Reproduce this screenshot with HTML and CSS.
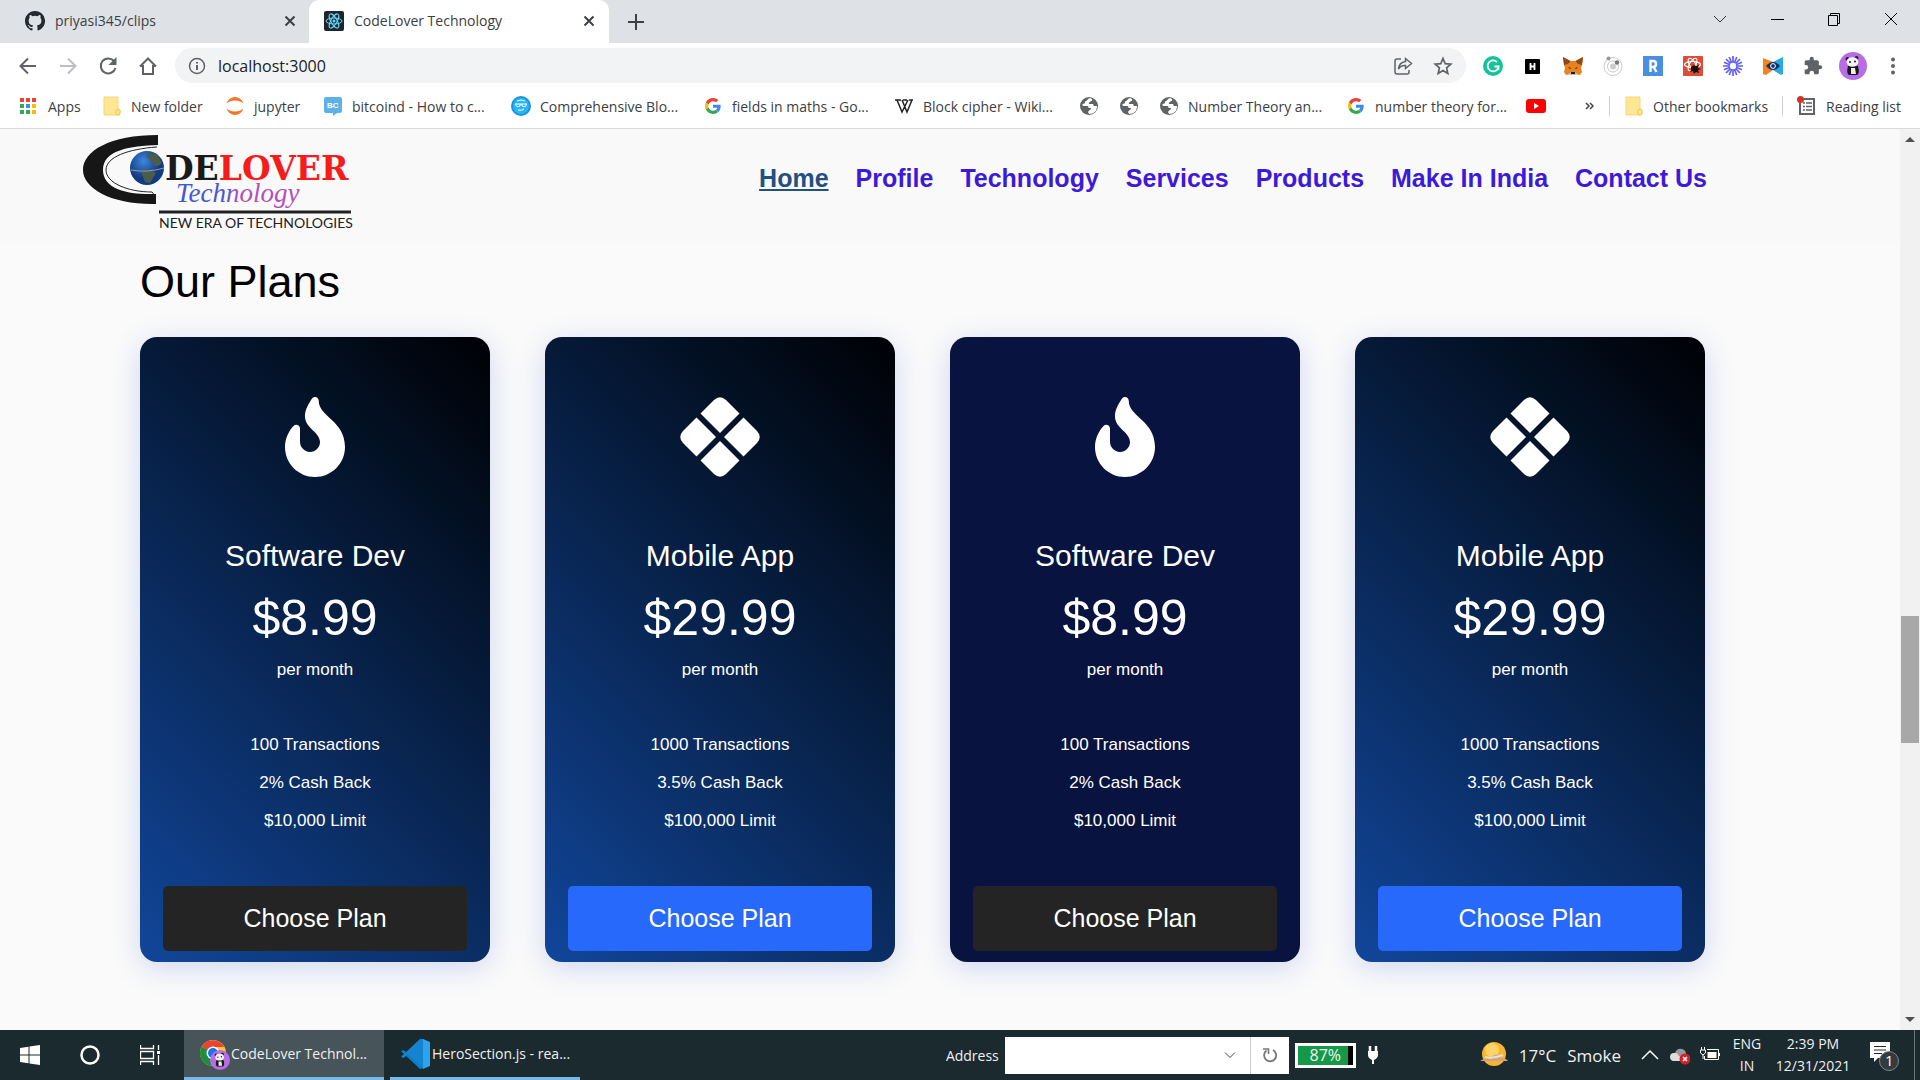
FILE: index.html
```html
<!DOCTYPE html>
<html lang="en">
<head>
<meta charset="utf-8">
<title>CodeLover Technology</title>
<link rel="stylesheet" href="styles.css">
</head>
<body>
<svg class="sprite" aria-hidden="true">
  <symbol id="close" viewBox="0 0 12 12"><path d="M1.500 1.500 10.500 10.500M10.500 1.500 1.500 10.500" stroke="#3c4043" stroke-width="2" fill="none"/></symbol>
  <symbol id="folder" viewBox="0 0 20 20"><path d="M2 1h14v12l2 1v4l-1 1H2z" fill="#ffe694" stroke="#f8d775"/><path d="M14 18v-4l2-1 2 1v3l-1 2h-2z" fill="#ffe694" stroke="#f0c850"/></symbol>
  <symbol id="google" viewBox="0 0 48 48"><path fill="#ea4335" d="M24 9.500c3.540 0 6.710 1.220 9.210 3.600l6.850-6.850C35.900 2.380 30.470 0 24 0 14.620 0 6.510 5.380 2.560 13.220l7.980 6.190C12.430 13.720 17.740 9.500 24 9.500z"/><path fill="#4285f4" d="M46.980 24.550c0-1.570-.15-3.090-.38-4.550H24v9.020h12.940c-.58 2.960-2.260 5.480-4.780 7.180l7.730 6c4.510-4.180 7.090-10.360 7.090-17.650z"/><path fill="#fbbc05" d="M10.530 28.590c-.48-1.450-.76-2.990-.76-4.590s.27-3.140.76-4.590l-7.980-6.190C.92 16.460 0 20.120 0 24s.92 7.540 2.560 10.780l7.970-6.190z"/><path fill="#34a853" d="M24 48c6.480 0 11.930-2.130 15.890-5.810l-7.730-6c-2.150 1.450-4.920 2.300-8.160 2.300-6.260 0-11.570-4.220-13.470-9.910l-7.980 6.190C6.510 42.620 14.620 48 24 48z"/></symbol>
  <symbol id="globe" viewBox="0 0 20 20"><circle cx="10" cy="10" r="9" fill="#5f6368"/><path d="M11 2c-3 1-2 2-4 3S7 7 5 7.500 3 9 4 10h4c2 0 1 2 2 2h2c0 2-2 2-3 4l1 2c5 0 8-3 8-8h-3c-1-1 0-2-2-2h-3c-1-1 1-2 2-3 2 0 1-2 1-2z" fill="#fff"/></symbol>
  <symbol id="flame" viewBox="0 0 384 512"><path fill="#fff" d="M216 23.860c0-23.800-30.650-32.770-44.150-13.040C48 191.850 224 200 224 288c0 35.630-29.110 64.460-64.850 63.990-35.170-.45-63.150-29.770-63.150-64.940v-85.510c0-21.700-26.470-32.230-41.430-16.500C27.800 213.160 0 261.330 0 320c0 105.870 86.130 192 192 192s192-86.130 192-192c0-170.290-168-193.170-168-296.140z"/></symbol>
  <symbol id="diamonds" viewBox="0 0 80 80"><g fill="#fff"><path d="M20.500 16.500 34 3q6-5.500 12 0l13.500 13.500L40 36z"/><path d="M20.500 63.500 34 77q6 5.500 12 0l13.500-13.500L40 44z"/><path d="M16.500 20.500 3 34q-5.500 6 0 12l13.500 13.500L36 40z"/><path d="M63.500 20.500 77 34q5.500 6 0 12L63.500 59.500 44 40z"/></g></symbol>
  <symbol id="panda" viewBox="0 0 28 28"><circle cx="14" cy="14" r="14" fill="#b86de4"/><path d="M9 14q-2 8 1 9h8q3-1 1-9l-5-2z" fill="#181818"/><path d="M12 16h4l1 6h-5z" fill="#eee"/><circle cx="8.500" cy="7" r="2" fill="#222"/><circle cx="17.500" cy="6" r="2" fill="#222"/><ellipse cx="13.500" cy="10" rx="6" ry="4.800" fill="#f2f2f2"/><circle cx="11" cy="10" r="1" fill="#222"/><circle cx="16" cy="9.500" r="1" fill="#222"/></symbol>
</svg>

<div class="tabs">
  <div class="tab">
    <svg class="i20" viewBox="0 0 16 16"><path fill="#24292f" d="M8 0C3.580 0 0 3.580 0 8c0 3.540 2.290 6.530 5.470 7.590.4.070.55-.17.55-.38 0-.19-.01-.82-.01-1.490-2.010.37-2.530-.49-2.690-.94-.09-.23-.48-.94-.82-1.130-.28-.15-.68-.52-.01-.53.63-.01 1.080.58 1.230.82.72 1.210 1.870.87 2.330.66.070-.52.280-.87.51-1.070-1.780-.2-3.640-.89-3.640-3.950 0-.87.31-1.590.82-2.150-.08-.2-.36-1.020.08-2.120 0 0 .67-.21 2.200.82a7.600 7.600 0 0 1 4 0c1.530-1.040 2.200-.82 2.200-.82.44 1.100.16 1.920.08 2.120.51.560.82 1.270.82 2.150 0 3.070-1.870 3.750-3.650 3.950.29.25.54.73.54 1.480 0 1.070-.01 1.930-.01 2.200 0 .21.15.46.55.38A8 8 0 0 0 8 0z"/></svg>
    <span class="tab-title">priyasi345/clips</span>
    <button class="bare" aria-label="Close tab"><svg class="i12"><use href="#close"/></svg></button>
  </div>
  <div class="tab tab-active">
    <svg class="i20" viewBox="0 0 20 20"><rect width="20" height="20" rx="2" fill="#20232a"/><g fill="none" stroke="#61dafb"><ellipse cx="10" cy="10" rx="8" ry="3"/><ellipse cx="10" cy="10" rx="8" ry="3" transform="rotate(60 10 10)"/><ellipse cx="10" cy="10" rx="8" ry="3" transform="rotate(120 10 10)"/></g><circle cx="10" cy="10" r="1.500" fill="#61dafb"/></svg>
    <span class="tab-title">CodeLover Technology</span>
    <button class="bare" aria-label="Close tab"><svg class="i12"><use href="#close"/></svg></button>
  </div>
  <button class="bare new-tab" aria-label="New tab"><svg class="i16" viewBox="0 0 16 16"><path d="M8 0v16M0 8h16" stroke="#3c4043" stroke-width="2"/></svg></button>
  <div class="window-buttons">
    <button class="bare" aria-label="Search tabs"><svg class="i14" viewBox="0 0 14 14"><path d="m1 4 6 6 6-6" stroke="#333" fill="none"/></svg></button>
    <button class="bare" aria-label="Minimize"><svg class="i14" viewBox="0 0 14 14"><path d="M1 7.500h13" stroke="#000"/></svg></button>
    <button class="bare" aria-label="Restore"><svg class="i14" viewBox="0 0 14 14"><path d="M1.500 3.500h9v10h-9zM3.500 3V1.500h9v10H11" stroke="#000" fill="none"/></svg></button>
    <button class="bare" aria-label="Close window"><svg class="i14" viewBox="0 0 14 14"><path d="m1 1 12 12M13 1 1 13" stroke="#000"/></svg></button>
  </div>
</div>

<div class="toolbar">
  <button class="bare tool" aria-label="Back"><svg class="i20" viewBox="0 0 20 20"><path d="M18 10H3M10 2.500 2.500 10l7.500 7.500" stroke="#5f6368" stroke-width="2" fill="none"/></svg></button>
  <button class="bare tool" aria-label="Forward"><svg class="i20" viewBox="0 0 20 20"><path d="M2 10h15M10 2.500l7.500 7.500-7.500 7.500" stroke="#bcbec1" stroke-width="2" fill="none"/></svg></button>
  <button class="bare tool" aria-label="Reload"><svg class="i20" viewBox="0 0 20 20"><path d="M16 5A7.500 7.500 0 1 0 17.500 12" stroke="#5f6368" stroke-width="2" fill="none"/><path d="M18.500 1v8h-8z" fill="#5f6368"/></svg></button>
  <button class="bare tool" aria-label="Home"><svg class="i20" viewBox="0 0 20 20"><path d="M5 9v9h10V9M2 10.500 10 2.500l8 8M2.500 10H5m10 0h2.500" stroke="#5f6368" stroke-width="2" fill="none"/></svg></button>
  <form class="omnibox">
    <svg class="i18" viewBox="0 0 18 18"><circle cx="9" cy="9" r="7.500" stroke="#5f6368" stroke-width="1.500" fill="none"/><path d="M9 8v5M9 5v1.500" stroke="#5f6368" stroke-width="2"/></svg>
    <input class="url" type="text" aria-label="Address and search bar" value="localhost:3000">
    <button type="button" class="bare tool" aria-label="Share"><svg class="i20" viewBox="0 0 20 20"><path d="M8 3H4Q2 3 2 5v11q0 2 2 2h10q2 0 2-2v-2" stroke="#5f6368" stroke-width="1.500" fill="none"/><path d="M12.500 2.500 18.500 7.500l-6 5V9.500Q8 9 5.500 13 6 6.500 12.500 5.500z" stroke="#5f6368" stroke-width="1.500" fill="none"/></svg></button>
    <button type="button" class="bare tool" aria-label="Bookmark this tab"><svg class="i20" viewBox="0 0 20 20"><path d="m10 2.500 2.200 5.200 5.600.5-4.200 3.700 1.200 5.500-4.800-2.900-4.800 2.900 1.200-5.500-4.200-3.700 5.600-.5z" stroke="#5f6368" stroke-width="1.700" fill="none"/></svg></button>
  </form>
  <button class="bare tool" aria-label="Grammarly"><svg class="i20" viewBox="0 0 20 20"><circle cx="10" cy="10" r="10" fill="#15c39a"/><path d="M14 6A5.500 5.500 0 1 0 15 12.500M15.500 14V10.500H11.500" stroke="#fff" stroke-width="1.800" fill="none"/></svg></button>
  <button class="bare tool" aria-label="H extension"><svg class="i20" viewBox="0 0 20 20"><rect x="2" y="3" width="15" height="15" rx="1" fill="#000"/><path d="M7.500 7v7M11.500 7v7M7.500 10.500h4" stroke="#fff" stroke-width="1.800"/></svg></button>
  <button class="bare tool" aria-label="MetaMask"><svg class="i20" viewBox="0 0 20 20"><path d="m0 1 7.500 4h5L20 1l-1 8-1 3 1 4-2 3-5-1-2 1-2-1-5 1-2-3 1-4-1-3z" fill="#e8821e"/><path d="m0 1 7.500 4L5 8 1 9zM20 1l-7.500 4L15 8l4 1z" fill="#8a4a1c"/><path d="m5 18 3 1h4l3-1-3-2H8z" fill="#c9b9a8"/><path d="m5 11 3 1-1 1zM15 11l-3 1 1 1zM8 16h4v2H8z" fill="#222"/></svg></button>
  <button class="bare tool" aria-label="Orbit"><svg class="i20" viewBox="0 0 20 20"><g fill="none" stroke="#c9c9c9"><circle cx="10" cy="10.500" r="9"/><circle cx="10" cy="10.500" r="5.500"/></g><circle cx="10" cy="10.500" r="3" fill="#ccc"/><circle cx="5.500" cy="2.500" r="2" fill="#999"/><circle cx="14" cy="6.500" r="2.200" fill="#777"/></svg></button>
  <button class="bare tool" aria-label="R extension"><svg class="i20" viewBox="0 0 20 20"><rect width="20" height="20" fill="#4a90e2"/><path d="M7.500 16V5H10q3 0 3 3t-3 3H8m2.500 0 3 5" stroke="#fff" stroke-width="2.400" fill="none"/></svg></button>
  <button class="bare tool" aria-label="React tools"><svg class="i20" viewBox="0 0 20 20"><rect width="20" height="20" rx="1" fill="#dd4b39"/><g fill="none" stroke="#fff" stroke-width="1.200"><ellipse cx="9.500" cy="8.500" rx="8" ry="3"/><ellipse cx="9.500" cy="8.500" rx="7" ry="3" transform="rotate(60 9.500 8.500)"/><ellipse cx="9.500" cy="8.500" rx="7" ry="3" transform="rotate(120 9.500 8.500)"/></g><path d="m8 11 3-2 2 1 3-1-1 3 3 1-3 1 1 3-3-1-2 2-1-3-3 1 1-2z" fill="#1d1110"/></svg></button>
  <button class="bare tool" aria-label="Loom"><svg class="i20" viewBox="0 0 20 20"><g stroke="#625df5" stroke-width="1.700"><path d="M10 0v20M0 10h20M3 3l14 14M17 3 3 17M6.200 1l7.600 18M13.800 1 6.200 19M1 6.200l18 7.600M1 13.800l18-7.600"/></g><circle cx="10" cy="10" r="3.200" fill="#fff"/></svg></button>
  <button class="bare tool" aria-label="Butterfly"><svg class="i20" viewBox="0 0 20 20"><path d="m0 2 10 4v8L3 19 0 18z" fill="#f58220"/><path d="m20 1-10 5v8l8 5 2-1z" fill="#29a9e1"/><path d="M3 10q7-8 14 0-7 8-14 0z" fill="#12346b"/><circle cx="10" cy="10" r="2.400" fill="none" stroke="#fff"/></svg></button>
  <button class="bare tool" aria-label="Extensions"><svg class="i20" viewBox="0 0 24 24"><path fill="#5f6368" d="M20.500 11H19V7c0-1.100-.9-2-2-2h-4V3.500a2.500 2.500 0 0 0-5 0V5H4c-1.100 0-2 .9-2 2v3.800h1.500a2.700 2.700 0 0 1 0 5.400H2V20c0 1.100.9 2 2 2h3.800v-1.500a2.700 2.700 0 0 1 5.400 0V22H17c1.100 0 2-.9 2-2v-4h1.500a2.500 2.500 0 0 0 0-5z"/></svg></button>
  <button class="bare tool" aria-label="Profile"><svg class="i28"><use href="#panda"/></svg></button>
  <button class="bare tool" aria-label="Menu"><svg class="i20" viewBox="0 0 20 20"><g fill="#5f6368"><circle cx="10" cy="3.500" r="2"/><circle cx="10" cy="10" r="2"/><circle cx="10" cy="16.500" r="2"/></g></svg></button>
</div>

<div class="bookmarks">
  <div class="bookmark-grid">
    <a class="bm" href="#apps"><svg class="i20" viewBox="0 0 20 20"><path d="M1 2h4v4H1zM7 2h4v4H7zM13 2h4v4h-4z" fill="#ea4335"/><path d="M1 8h4v4H1zM1 14h4v4H1zM7 14h4v4H7z" fill="#34a853"/><path d="M7 8h4v4H7z" fill="#4285f4"/><path d="M13 8h4v4h-4zM13 14h4v4h-4z" fill="#fbbc05"/></svg>Apps</a>
    <a class="bm" href="#new"><svg class="i20"><use href="#folder"/></svg>New folder</a>
    <a class="bm" href="#jupyter"><svg class="i20" viewBox="0 0 20 20"><path d="M1.500 7.500Q4 1 10 1t8.500 6.500Q15 4.500 10 4.500T1.500 7.500zM1.500 12.500Q4 19 10 19t8.500-6.500Q15 15.500 10 15.500T1.500 12.500z" fill="#f37726"/></svg>jupyter</a>
    <a class="bm" href="#bitcoind"><svg class="i20" viewBox="0 0 20 20"><path d="M3 1h14q2 0 2 2v12q0 2-2 2h-3l-4 3v-3H3q-2 0-2-2V3q0-2 2-2z" fill="#5eb1e4"/><text x="4" y="12" class="tiny">BC</text></svg>bitcoind - How to c...</a>
    <a class="bm" href="#blog"><svg class="i20" viewBox="0 0 20 20"><circle cx="10" cy="10" r="9" fill="#2ab6f6" stroke="#1a95e0" stroke-width="2"/><path d="M4 8h12M4.500 8q1 4 4.500 2V8m2 0v2q4 2 4.500-2M7 14q4 1 6-1M6 5q4-2 8 0" stroke="#fff" fill="none"/></svg>Comprehensive Blo...</a>
    <a class="bm" href="#fields"><svg class="i16"><use href="#google"/></svg>fields in maths - Go...</a>
    <a class="bm" href="#cipher"><svg class="i20" viewBox="0 0 20 20"><path d="M1 4h6M9 4h4M15 4h4M3 4l5 12 6-12M8 4l5 12 5-12" stroke="#222" stroke-width="1.500" fill="none"/></svg>Block cipher - Wiki...</a>
    <a class="bm" href="#page1" aria-label="Saved page"><svg class="i20"><use href="#globe"/></svg></a>
    <a class="bm" href="#page2" aria-label="Saved page"><svg class="i20"><use href="#globe"/></svg></a>
    <a class="bm" href="#nt"><svg class="i20"><use href="#globe"/></svg>Number Theory an...</a>
    <a class="bm" href="#ntf"><svg class="i16"><use href="#google"/></svg>number theory for...</a>
    <a class="bm" href="#yt" aria-label="YouTube"><svg class="i20" viewBox="0 0 20 20"><rect y="3" width="20" height="14" rx="3" fill="#f00"/><path d="m8 7 5 3-5 3z" fill="#fff"/></svg></a>
  </div>
  <button class="bare more" aria-label="More bookmarks"><svg class="i10" viewBox="0 0 10 10"><path d="m1 2 3 3-3 3M5 2l3 3-3 3" stroke="#444" stroke-width="1.500" fill="none"/></svg></button>
  <a class="bm side other" href="#other"><svg class="i20"><use href="#folder"/></svg>Other bookmarks</a>
  <a class="bm side" href="#reading"><svg class="i20" viewBox="0 0 20 20"><path d="M3 3h14v15H3z" stroke="#5f6368" stroke-width="2" fill="none"/><path d="M6 7h2m1 0h6M6 10.500h2m1 0h6M6 14h2m1 0h6" stroke="#5f6368" stroke-width="1.500"/><circle cx="3.500" cy="3.500" r="3.500" fill="#d93025"/></svg>Reading list</a>
</div>

<div class="viewport">
  <div class="page">
    <header class="site-header">
      <svg class="logo" viewBox="0 0 290 105" role="img" aria-label="CodeLover Technology">
        <defs>
          <radialGradient id="earth" cx=".4" cy=".3"><stop offset="0" stop-color="#3c86dc"/><stop offset="1" stop-color="#143a80"/></radialGradient>
          <linearGradient id="ink"><stop offset="0.4" stop-color="#4a55d0"/><stop offset="0.5" stop-color="#b050b8"/></linearGradient>
        </defs>
        <path d="M78 6C30 6 3 22 3 41s30 35 73 34V65C50 66 23 61 23 41S50 17 78 16z" fill="#161616"/>
        <path d="M77 18C48 20 26 28 26 41s22 22 46 22l4 5" fill="none" stroke="#222"/>
        <circle cx="67" cy="39" r="17" fill="url(#earth)"/>
        <path d="M66 27q5-4 11-2l5 9q-3 4-7 3l-4-5zM61 42l8-2 7 4-6 10-5-1z" fill="#4a5c4c"/>
        <path d="M51 41q16 3 33-2" stroke="#99a" fill="none"/>
        <text x="85" y="51" class="logo-name">DE<tspan class="logo-red">LOVER</tspan></text>
        <text x="96" y="73" class="logo-sub" fill="url(#ink)">Technology</text>
        <path d="M79 83h192" stroke="#222" stroke-width="3"/>
        <text x="79" y="99" class="logo-tag">NEW ERA OF TECHNOLOGIES</text>
      </svg>
      <nav class="nav">
        <a class="current" href="#home">Home</a>
        <a href="#profile">Profile</a>
        <a href="#technology">Technology</a>
        <a href="#services">Services</a>
        <a href="#products">Products</a>
        <a href="#india">Make In India</a>
        <a href="#contact">Contact Us</a>
      </nav>
    </header>
    <main class="plans">
      <h1>Our Plans</h1>
      <div class="cards">
        <section class="card">
          <svg class="card-icon"><use href="#flame"/></svg>
          <h2>Software Dev</h2><p class="price">$8.99</p><p class="per">per month</p>
          <ul><li>100 Transactions</li><li>2% Cash Back</li><li>$10,000 Limit</li></ul>
          <button class="choose">Choose Plan</button>
        </section>
        <section class="card">
          <svg class="card-icon"><use href="#diamonds"/></svg>
          <h2>Mobile App</h2><p class="price">$29.99</p><p class="per">per month</p>
          <ul><li>1000 Transactions</li><li>3.5% Cash Back</li><li>$100,000 Limit</li></ul>
          <button class="choose choose-blue">Choose Plan</button>
        </section>
        <section class="card card-hover">
          <svg class="card-icon"><use href="#flame"/></svg>
          <h2>Software Dev</h2><p class="price">$8.99</p><p class="per">per month</p>
          <ul><li>100 Transactions</li><li>2% Cash Back</li><li>$10,000 Limit</li></ul>
          <button class="choose">Choose Plan</button>
        </section>
        <section class="card">
          <svg class="card-icon"><use href="#diamonds"/></svg>
          <h2>Mobile App</h2><p class="price">$29.99</p><p class="per">per month</p>
          <ul><li>1000 Transactions</li><li>3.5% Cash Back</li><li>$100,000 Limit</li></ul>
          <button class="choose choose-blue">Choose Plan</button>
        </section>
      </div>
    </main>
  </div>
  <div class="scrollbar">
    <svg class="i20" viewBox="0 0 20 20"><path d="m5 13 5-5 5 5z" fill="#505050"/></svg>
    <div class="track"><div class="thumb"></div></div>
    <svg class="i20" viewBox="0 0 20 20"><path d="m5 7 5 5 5-5z" fill="#505050"/></svg>
  </div>
</div>

<footer class="taskbar">
  <button class="bare sys" aria-label="Start"><svg class="i20" viewBox="0 0 20 20"><path d="m0 3 8.500-1.300v7.800H0zM9.500 1.500 20 0v9.500H9.500zM0 10.500h8.500v7.800L0 17zM9.500 10.500H20V20L9.500 18.500z" fill="#fff"/></svg></button>
  <button class="bare sys" aria-label="Cortana"><svg class="i20" viewBox="0 0 20 20"><circle cx="10" cy="10" r="8.500" stroke="#fff" stroke-width="2.500" fill="none"/></svg></button>
  <button class="bare sys" aria-label="Task view"><svg class="i20" viewBox="0 0 20 20"><path d="M.5 0v3.500h13V0M.5 20v-3.500h13V20M.5 6.500h13v7H.5zM18.500 0v5M18.500 10v10" stroke="#fff" stroke-width="1.300" fill="none"/><path d="M17 6h3v3h-3z" fill="#fff"/></svg></button>
  <button class="bare task task-active"><svg class="i32" viewBox="0 0 32 32"><circle cx="14" cy="15" r="13" fill="#fcc934"/><path d="M14 15 2.700 8.500A13 13 0 0 1 25.300 9H14z" fill="#ea4335"/><path d="M14 15 2.700 8.500A13 13 0 0 0 12 27.900L18 19z" fill="#1e8e3e"/><circle cx="14" cy="15" r="6.500" fill="#fff"/><circle cx="14" cy="15" r="5" fill="#1a73e8"/><use href="#panda" x="11" y="12" width="20" height="20"/></svg>CodeLover Technol...</button>
  <button class="bare task task-open"><svg class="i32" viewBox="0 0 32 32"><path d="M24 1 8 15.500 3.500 12 1 13.300 20 31l4-1z" fill="#0c7dc9"/><path d="M24 31 8 16.500 3.500 20 1 18.700 20 1h4z" fill="#1583d0"/><path d="m23 1 7 3v24l-7 3z" fill="#2ba4ee"/></svg>HeroSection.js - rea...</button>
  <label class="address-label" for="address">Address</label>
  <div class="address"><input id="address" type="text"><svg class="i14" viewBox="0 0 14 14"><path d="m2 4.500 5 5 5-5" stroke="#444" fill="none"/></svg>
    <button class="bare refresh" aria-label="Refresh"><svg class="i16" viewBox="0 0 16 16"><path d="M11 3A6 6 0 1 1 4.500 3.500" stroke="#777" stroke-width="1.800" fill="none"/><path d="M1 2h5.500v5" stroke="#777" stroke-width="1.600" fill="none"/></svg></button></div>
  <div class="battery">87%</div>
  <svg class="plug" viewBox="0 0 12 20"><path d="M3 1v6M9 1v6" stroke="#fff" stroke-width="2.500"/><path d="M1 6h10v4q0 3-4 5v4H5v-4Q1 13 1 10z" fill="#fff"/></svg>
  <div class="weather"><svg class="i28" viewBox="0 0 28 28"><circle cx="14" cy="13" r="12" fill="#fbb52c"/><circle cx="12" cy="9" r="7" fill="#fdd368"/><path d="M0 20h28q-2-3-7-3-2-4-6-3-4 1-4 3-7 0-11 3z" fill="#c9a58a"/><path d="M5 16q7 2 18-2" stroke="#eee0cc" stroke-width="2" fill="none"/></svg><span>17°C</span><span>Smoke</span></div>
  <div class="tray">
    <svg class="i20" viewBox="0 0 20 20"><path d="m2 14 8-8 8 8" stroke="#fff" stroke-width="1.500" fill="none"/></svg>
    <svg class="i20" viewBox="0 0 20 20"><path d="M5 9q1-6 7-5 4 1 4 5v7H5z" fill="#999"/><path d="M0 12q0-4 4-4 3-1 5 3l5 1v4H3q-3-1-3-4z" fill="#ddd"/><circle cx="15" cy="14" r="5.500" fill="#d4202c"/><path d="m13 12 4 4M17 12l-4 4" stroke="#fff" stroke-width="1.500"/></svg>
    <svg class="i20" viewBox="0 0 20 20"><path d="M7 4.500h11.500v10H4.500V11M19.500 8v3M1.500 2v3M4.500 2v3M.5 5h5v3L3 10 .5 8zM3 10v4" stroke="#fff" fill="none"/><path d="M7.500 7h9v6h-9z" fill="#fff"/></svg>
  </div>
  <div class="stack lang"><span>ENG</span><span>IN</span></div>
  <div class="stack clock"><span>2:39 PM</span><span>12/31/2021</span></div>
  <svg class="i32" viewBox="0 0 32 32"><path d="M2 3h20v16H10l-4 4v-4H2z" fill="#fff"/><path d="M6 7.500h12M6 11h12M6 14.500h8" stroke="#1b2a2f"/><circle cx="21" cy="22" r="9.500" fill="#333b3e" stroke="#7e878a"/><text x="17" y="27" class="count">1</text></svg>
  <div class="desktop-edge"></div>
</footer>
</body>
</html>
```
FILE: styles.css
```css
* { box-sizing: border-box; }
body { margin: 0; min-height: 100vh; display: flex; flex-direction: column; font-family: "Open Sans", "Noto Sans", sans-serif; font-size: 14px; color: #3c4043; background: #fafafa; }
svg { flex: none; display: block; }
.sprite { display: none; }
.bare { border: 0; padding: 0; margin: 0; background: none; font: inherit; color: inherit; display: flex; align-items: center; justify-content: center; }
.i10 { width: 10px; height: 10px; }
.i12 { width: 12px; height: 12px; }
.i14 { width: 14px; height: 14px; }
.i16 { width: 16px; height: 16px; margin: 0 2px; }
.i18 { width: 18px; height: 18px; }
.i20 { width: 20px; height: 20px; }
.i28 { width: 28px; height: 28px; }
.i32 { width: 32px; height: 32px; }

/* Tab strip */
.tabs { display: flex; height: 43px; background: #dee1e6; align-items: stretch; }
.tab { width: 309px; display: flex; align-items: center; gap: 10px; padding: 0 13px 2px 25px; }
.tab-active { width: 300px; padding: 0 14px 2px 15px; background: #fff; border-radius: 10px 10px 0 0; }
.tab-title { flex: 1; }
.new-tab { width: 54px; }
.window-buttons { display: flex; margin-left: auto; gap: 43px; padding: 0 22px 6px 0; }

/* Toolbar */
.toolbar { display: flex; align-items: center; height: 45px; padding: 0 7px 0 8px; background: #fff; }
.tool { width: 40px; height: 36px; }
.omnibox { flex: 1; display: flex; align-items: center; height: 35px; margin: 0 7px; padding: 0 3px 0 13px; border-radius: 18px; background: #f1f3f4; }
.url { flex: 1; border: 0; padding: 0 12px; background: none; font: 16px "Open Sans", sans-serif; color: #202124; outline: 0; }

/* Bookmarks */
.bookmarks { display: flex; align-items: center; height: 41px; padding: 0 19px 4px; background: #fff; border-bottom: 1px solid #d9dadc; }
.bookmark-grid { display: grid; grid-template-columns: 83px 123px 98px 188px 192px 191px 185px 40px 40px 187px 180px 40px; }
.bm { display: flex; align-items: center; gap: 9px; color: #3c4043; text-decoration: none; white-space: nowrap; }
.more { margin-left: auto; margin-right: 14px; }
.side { border-left: 1px solid #ccced1; height: 20px; padding-left: 14px; }
.other { padding: 0 14px; }
.tiny { font: bold 8px "Liberation Sans", sans-serif; fill: #fff; }

/* Page */
.viewport { flex: 1; display: flex; font-family: "Liberation Sans", Arial, sans-serif; }
.page { flex: 1; background: #fafafa; }
.site-header { display: flex; justify-content: space-between; padding: 0 193px 0 80px; background: #f9f9f9; height: 113px; }
.logo { width: 290px; height: 105px; }
.logo-name { font: bold 33px "DejaVu Serif", serif; fill: #1a1a1a; }
.logo-red { fill: #f51c1c; }
.logo-sub { font: italic 27px "Liberation Serif", serif; }
.logo-tag { font: 14px Lato, sans-serif; fill: #222; }
.nav { display: flex; gap: 27px; padding-top: 35px; font-size: 25px; font-weight: bold; line-height: 29px; }
.nav a { color: #3d1ad9; text-decoration: none; white-space: nowrap; }
.nav .current { color: #22507f; text-decoration: underline; }
.plans { padding: 14px 195px 68px 140px; }
h1 { margin: 0 0 29px; font-size: 45px; line-height: 52px; font-weight: normal; color: #000; }
.cards { display: grid; grid-template-columns: repeat(4, 1fr); gap: 55px; }
.card { display: flex; flex-direction: column; align-items: center; padding: 60px 23px 11px; border-radius: 17px; color: #fff; background: linear-gradient(45deg, #11469a 0%, #020c1a 84%, #000005 100%); box-shadow: 0 6px 30px rgba(40, 80, 210, .2); }
.card-hover { background: #08133f; }
.card-icon { width: 80px; height: 80px; }
h2 { margin: 62px 0 17px; font-size: 30px; line-height: 34px; font-weight: normal; }
.card p { margin: 0; }
.card .price { font-size: 50px; line-height: 57px; margin-bottom: 12px; }
.per { font-size: 17px; line-height: 22px; }
ul { list-style: none; margin: 45px 0 46px; padding: 0; text-align: center; font-size: 17px; line-height: 38px; }
.choose { width: 100%; height: 65px; border: 0; border-radius: 5px; background: #242424; color: #fff; font: 25px "Liberation Sans", Arial, sans-serif; }
.choose-blue { background: #276afb; }
.scrollbar { width: 20px; display: flex; flex-direction: column; background: #f1f1f1; }
.track { flex: 1; display: grid; grid-template-rows: 467fr 127fr 267fr; }
.thumb { grid-row: 2; background: #a8a8a8; margin: 0 1px; }

/* Taskbar */
.taskbar { display: flex; align-items: center; height: 50px; background: #1b2a2f; color: #f0f0f0; white-space: nowrap; }
.sys { width: 60px; height: 50px; }
.task { height: 50px; width: 200px; justify-content: flex-start; padding-left: 15px; border-bottom: 3px solid #76b9ed; margin-left: 4px; }
.task-active { background: #475459; }
.task-open { width: 190px; padding-left: 10px; margin-left: 6px; }
.address-label { margin-left: auto; margin-right: 6px; }
.address { display: flex; align-items: center; width: 284px; height: 37px; background: #fff; }
.address input { flex: 1; min-width: 0; height: 100%; border: 0; background: none; outline: 0; }
.refresh { width: 39px; height: 37px; margin-left: 13px; border-left: 1px solid #ccc; }
.battery { width: 61px; height: 25px; margin-left: 6px; border: 3px solid #fff; background: linear-gradient(90deg, #159947 50px, #000 50px); text-align: center; font-size: 16px; line-height: 19px; }
.plug { width: 12px; height: 20px; margin-left: 11px; }
.weather { display: flex; align-items: center; gap: 11px; margin-left: 101px; font-size: 17px; }
.tray { display: flex; gap: 10px; margin-left: 19px; }
.stack { display: flex; flex-direction: column; align-items: center; font-size: 14px; line-height: 22px; }
.lang { width: 54px; }
.clock { width: 78px; margin-right: 16px; }
.count { font: 15px "Open Sans", sans-serif; fill: #fff; }
.desktop-edge { width: 6px; height: 50px; margin-left: 14px; border-left: 1px solid #6d7679; }
```
